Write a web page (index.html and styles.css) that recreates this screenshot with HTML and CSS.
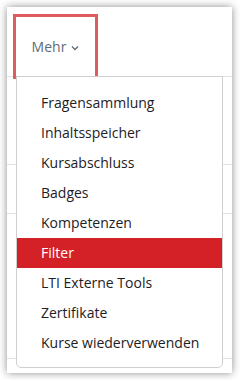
FILE: index.html
```html
<!DOCTYPE html>
<html lang="de">
<head>
    <meta charset="UTF-8">
    <title>Mehr</title>
    <link rel="stylesheet" href="styles.css">
</head>
<body>
    <div class="card">
        <nav class="secondary-nav">
            <div class="nav-item">
                <span class="nav-label">Mehr</span>
                <svg class="chevron" width="8" height="6" viewBox="0 0 8 6">
                    <path d="M1 1.5 L4 4.5 L7 1.5" fill="none" stroke="currentColor" stroke-width="1.3"/>
                </svg>
            </div>
        </nav>

        <!-- Inhalt unter dem Menü -->
        <div class="content">
            <div class="row row-a"></div>
            <div class="row row-b"></div>
            <div class="row row-c"></div>
        </div>

        <ul class="dropdown-menu">
            <li class="dropdown-item">Fragensammlung</li>
            <li class="dropdown-item">Inhaltsspeicher</li>
            <li class="dropdown-item">Kursabschluss</li>
            <li class="dropdown-item">Badges</li>
            <li class="dropdown-item">Kompetenzen</li>
            <li class="dropdown-item active">Filter</li>
            <li class="dropdown-item">LTI Externe Tools</li>
            <li class="dropdown-item">Zertifikate</li>
            <li class="dropdown-item">Kurse wiederverwenden</li>
        </ul>
    </div>
</body>
</html>
```

FILE: styles.css
```css
* {
    margin: 0;
    padding: 0;
    box-sizing: border-box;
}

body {
    background-color: #fff;
    font-family: "Open Sans", "Noto Sans", sans-serif;
    font-size: 14px;
    color: #1d2125;
}

.card {
    position: relative;
    width: 225px;
    height: 366px;
    margin: 7px;
    background-color: #fff;
    box-shadow: 0 0 8px rgba(0, 0, 0, 0.45);
    overflow: hidden;
}

.secondary-nav {
    height: 70px;
    padding: 10px 0 0 9px;
    border-bottom: 1px solid #dee2e6;
}

.nav-item {
    width: 79px;
    height: 59px;
    display: flex;
    align-items: center;
    justify-content: center;
    gap: 5px;
    color: #5f6b78;
    font-size: 14px;
    outline: 3px solid #e05a60;
}

.chevron {
    margin-top: 2px;
}

.row {
    border-bottom: 1px solid #dee2e6;
}

.row-a {
    height: 88px;
}

.row-b {
    height: 49px;
}

.row-c {
    height: 145px;
}

.dropdown-menu {
    position: absolute;
    left: 9px;
    top: 69px;
    width: 207px;
    list-style: none;
    background-color: #fff;
    border: 1px solid #cfcfcf;
    border-radius: 0 0 5px 5px;
    padding: 11px 0 9px;
}

.dropdown-item {
    height: 30px;
    line-height: 30px;
    padding-left: 24px;
    white-space: nowrap;
}

.dropdown-item.active {
    background-color: #d42127;
    color: #fff;
}
```
